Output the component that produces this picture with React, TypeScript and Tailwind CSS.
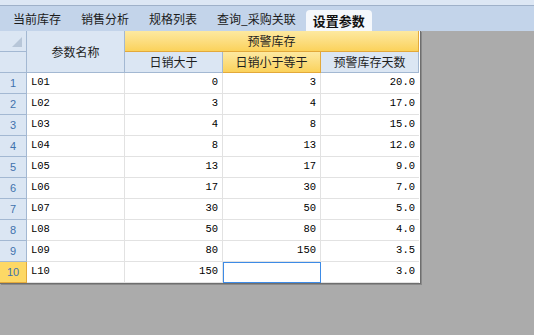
import React from 'react';

const tabs = ['当前库存', '销售分析', '规格列表', '查询_采购关联'];

const rows: [string, string, string, string][] = [
  ['L01', '0', '3', '20.0'],
  ['L02', '3', '4', '17.0'],
  ['L03', '4', '8', '15.0'],
  ['L04', '8', '13', '12.0'],
  ['L05', '13', '17', '9.0'],
  ['L06', '17', '30', '7.0'],
  ['L07', '30', '50', '5.0'],
  ['L08', '50', '80', '4.0'],
  ['L09', '80', '150', '3.5'],
  ['L10', '150', '', '3.0'],
];

const cjk = "font-['Noto_Sans_CJK_SC',sans-serif]";
const mono = "font-['Liberation_Mono','DejaVu_Sans_Mono',monospace]";

const hdr = `bg-[#dbe6f3] border-r border-b border-[#a3b8d2] flex items-center justify-center text-[12px] text-[#1e1e1e] ${cjk}`;
const yellow = `bg-gradient-to-b from-[#fde9a0] to-[#fbd25a] border-r border-b border-[#e3a93a] flex items-center justify-center text-[12px] text-[#1e1e1e] ${cjk}`;

export default function App() {
  return (
    <div className="w-[534px] h-[335px] bg-[#ababab] flex flex-col overflow-hidden">
      <div className="h-[6px] bg-[#dde7f4] border-b border-[#9fb1c9] shrink-0" />
      <div className={`h-[25px] bg-[#c3d4ea] flex items-end pl-[3px] shrink-0 ${cjk}`}>
        {tabs.map((t) => (
          <div key={t} className="h-[25px] px-[10px] flex items-center text-[12px] text-[#1b1b1b]">
            {t}
          </div>
        ))}
        <div className="h-[21px] px-[7px] bg-[#f5f8fc] rounded-t-[4px] flex items-center text-[13px] font-bold text-[#111]">
          设置参数
        </div>
      </div>

      <div className="w-[421px] bg-white border-r border-b border-[#6e6e6e] shadow-[1px_1px_0_#8a8a8a]">
        <div className="grid grid-cols-[27px_98px_98px_98px_98px] grid-rows-[21px_21px]">
          <div className={`${hdr} relative`}>
            <div className="absolute right-[4px] bottom-[4px] w-0 h-0 border-l-[10px] border-l-transparent border-b-[10px] border-b-[#b7c6d8]" />
          </div>
          <div className={`${hdr} row-span-2`}>参数名称</div>
          <div className={`${yellow} col-span-3`}>预警库存</div>
          <div className={hdr} />
          <div className={hdr}>日销大于</div>
          <div className={yellow}>日销小于等于</div>
          <div className={hdr}>预警库存天数</div>
        </div>
        {rows.map((r, i) => {
          const last = i === rows.length - 1;
          return (
            <div key={r[0]} className="grid grid-cols-[27px_98px_98px_98px_98px] h-[21px]">
              <div
                className={`flex items-center justify-center border-r border-b text-[11px] font-['Liberation_Sans',sans-serif] text-[#3f72ad] ${
                  last ? 'bg-[#fdd865] border-[#e3a93a]' : 'bg-[#dbe6f3] border-[#a3b8d2]'
                }`}
              >
                {i + 1}
              </div>
              <div className={`flex items-center pl-[4px] border-r border-b border-[#e2e2e2] text-[10.5px] text-black ${mono}`}>
                {r[0]}
              </div>
              <div className={`flex items-center justify-end pr-[4px] border-r border-b border-[#e2e2e2] text-[10.5px] text-black ${mono}`}>
                {r[1]}
              </div>
              <div
                className={`flex items-center justify-end pr-[4px] border-r border-b text-[10.5px] text-black ${mono} ${
                  last ? 'border-[#e2e2e2] outline outline-1 -outline-offset-1 outline-[#3d8be6]' : 'border-[#e2e2e2]'
                }`}
              >
                {r[2]}
              </div>
              <div className={`flex items-center justify-end pr-[4px] border-b border-[#e2e2e2] text-[10.5px] text-black ${mono}`}>
                {r[3]}
              </div>
            </div>
          );
        })}
      </div>
    </div>
  );
}
